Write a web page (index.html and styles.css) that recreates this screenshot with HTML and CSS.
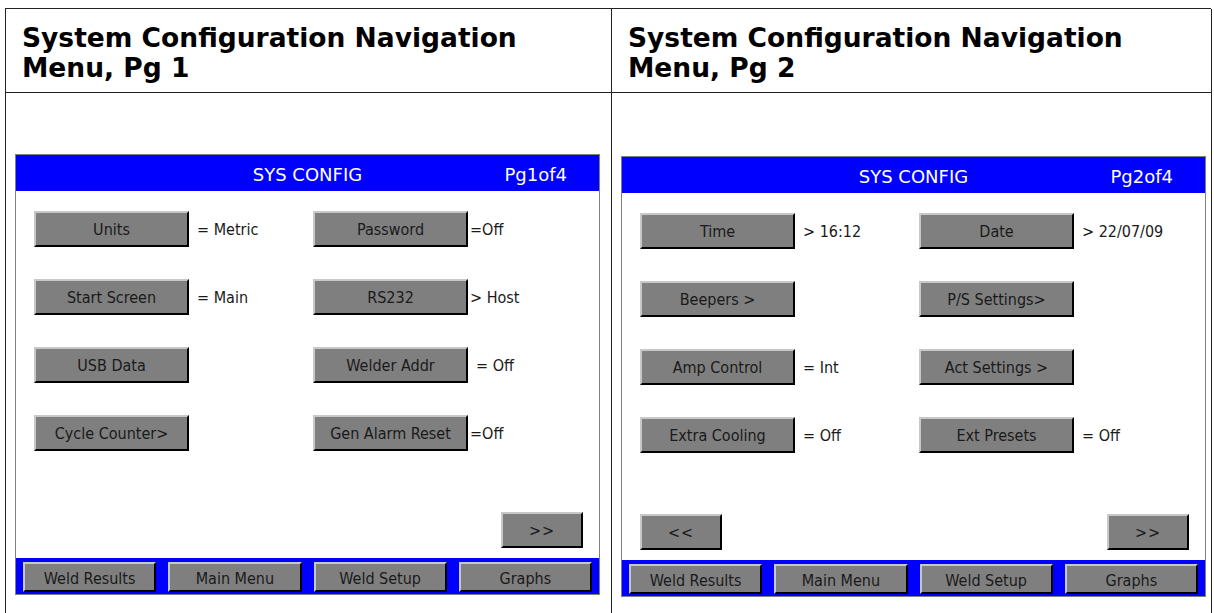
FILE: index.html
```html
<!DOCTYPE html>
<html>
<head>
<meta charset="utf-8">
<link rel="stylesheet" href="styles.css">
</head>
<body>
<div class="doc">
  <div class="cell head">System Configuration Navigation<br>Menu, Pg 1</div>
  <div class="cell head">System Configuration Navigation<br>Menu, Pg 2</div>

  <div class="cell body">
    <div class="screen">
      <div class="titlebar"><span class="spacer"></span><span class="title">SYS CONFIG</span><span class="pg">Pg1of4</span></div>
      <div class="content">
        <div class="grid">
          <div class="btn">Units</div><span class="val">= Metric</span>
          <div class="btn">Password</div><span class="val tight">=Off</span>
          <div class="btn">Start Screen</div><span class="val">= Main</span>
          <div class="btn">RS232</div><span class="val tight">&gt; Host</span>
          <div class="btn">USB Data</div><span class="val"></span>
          <div class="btn">Welder Addr</div><span class="val mid">= Off</span>
          <div class="btn">Cycle Counter&gt;</div><span class="val"></span>
          <div class="btn">Gen Alarm Reset</div><span class="val tight">=Off</span>
        </div>
        <div class="navrow">
          <div class="btn nav right">&gt;&gt;</div>
        </div>
      </div>
      <div class="bottombar">
        <div class="bbtn">Weld Results</div>
        <div class="bbtn">Main Menu</div>
        <div class="bbtn">Weld Setup</div>
        <div class="bbtn">Graphs</div>
      </div>
    </div>
  </div>

  <div class="cell body second">
    <div class="screen">
      <div class="titlebar"><span class="spacer"></span><span class="title">SYS CONFIG</span><span class="pg">Pg2of4</span></div>
      <div class="content">
        <div class="grid">
          <div class="btn">Time</div><span class="val">&gt; 16:12</span>
          <div class="btn">Date</div><span class="val">&gt; 22/07/09</span>
          <div class="btn">Beepers &gt;</div><span class="val"></span>
          <div class="btn">P/S Settings&gt;</div><span class="val"></span>
          <div class="btn">Amp Control</div><span class="val">= Int</span>
          <div class="btn">Act Settings &gt;</div><span class="val"></span>
          <div class="btn">Extra Cooling</div><span class="val">= Off</span>
          <div class="btn">Ext Presets</div><span class="val">= Off</span>
        </div>
        <div class="navrow">
          <div class="btn nav">&lt;&lt;</div>
          <div class="btn nav right">&gt;&gt;</div>
        </div>
      </div>
      <div class="bottombar">
        <div class="bbtn">Weld Results</div>
        <div class="bbtn">Main Menu</div>
        <div class="bbtn">Weld Setup</div>
        <div class="bbtn">Graphs</div>
      </div>
    </div>
  </div>
</div>
</body>
</html>
```

FILE: styles.css
```css
* { box-sizing: border-box; }

body {
  margin: 0;
  background: #fff;
  font-family: "DejaVu Sans Condensed", "DejaVu Sans", sans-serif;
  font-stretch: condensed;
  color: #1a1a1a;
}

.doc {
  margin: 8px 0 0 5px;
  width: 1206px;
  display: grid;
  grid-template-columns: 606px 600px;
  border-top: 1px solid #222;
  border-left: 1px solid #222;
}

.cell {
  border-right: 1px solid #222;
  border-bottom: 1px solid #222;
}

.head {
  height: 84px;
  padding: 14px 0 0 16px;
  font-family: "DejaVu Sans", sans-serif;
  font-stretch: normal;
  font-weight: bold;
  font-size: 26.5px;
  line-height: 30px;
  color: #000;
}

.body {
  height: 540px;
  padding: 61px 0 0 9px;
}

.body.second {
  padding-top: 63px;
}

.screen {
  width: 585px;
  height: 441px;
  border: 1px solid #808080;
  display: flex;
  flex-direction: column;
  background: #fff;
}

.titlebar {
  height: 36px;
  background: #0000ff;
  color: #fff;
  display: grid;
  grid-template-columns: 1fr auto 1fr;
  align-items: center;
  padding-top: 3px;
  font-family: "DejaVu Sans", sans-serif;
  font-stretch: normal;
  font-size: 18px;
}

.title { text-align: center; }
.pg { justify-self: end; padding-right: 32px; }

.content {
  flex: 1;
  display: flex;
  flex-direction: column;
  justify-content: space-between;
  padding: 20px 16px 10px 18px;
}

.grid {
  display: grid;
  grid-template-columns: 155px 124px 155px 1fr;
  grid-auto-rows: 36px;
  row-gap: 32px;
  align-items: center;
}

.btn {
  height: 36px;
  background: #7f7f7f;
  border-top: 2px solid #c8c8c8;
  border-left: 2px solid #c8c8c8;
  border-right: 2px solid #000;
  border-bottom: 2px solid #000;
  display: flex;
  align-items: center;
  justify-content: center;
  font-size: 16px;
  color: #1a1a1a;
  white-space: nowrap;
}

.val {
  font-size: 16px;
  padding-left: 8px;
  white-space: nowrap;
}

.val.tight { padding-left: 2px; }
.val.mid { padding-left: 8px; }

.navrow {
  display: flex;
}

.btn.nav {
  width: 82px;
  letter-spacing: 1px;
}

.btn.nav.right { margin-left: auto; }

.bottombar {
  height: 36px;
  background: #0000ff;
  display: flex;
  gap: 12px;
  padding: 4px 7px 2px;
}

.bbtn {
  flex: 1;
  background: #7f7f7f;
  border-top: 2px solid #c8c8c8;
  border-left: 2px solid #c8c8c8;
  border-right: 2px solid #000;
  border-bottom: 2px solid #000;
  display: flex;
  align-items: center;
  justify-content: center;
  padding-top: 2px;
  font-size: 16px;
  color: #1a1a1a;
}
```
